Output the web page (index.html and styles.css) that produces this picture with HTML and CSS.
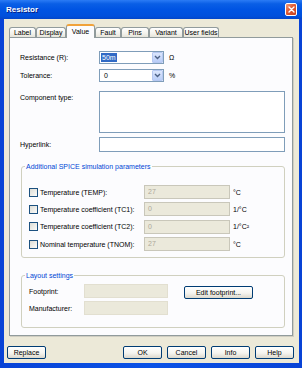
FILE: index.html
```html
<!DOCTYPE html>
<html lang="en">
<head>
  <meta charset="UTF-8" />
  <title>Resistor</title>
  <link rel="stylesheet" href="styles.css">
</head>
<body>
  <div class="window">
    <div class="titlebar">
      <span class="title">Resistor</span>
      <span class="close">
        <svg width="7" height="7" viewBox="0 0 7 7"><path d="M1 1L6 6M6 1L1 6" stroke="#fff" stroke-width="1.4" stroke-linecap="round"/></svg>
      </span>
    </div>
    <div class="frame">
      <div class="client">
        <div class="tabs">
          <div class="tab">Label</div>
          <div class="tab">Display</div>
          <div class="tab active">Value</div>
          <div class="tab">Fault</div>
          <div class="tab">Pins</div>
          <div class="tab">Variant</div>
          <div class="tab">User fields</div>
        </div>

        <div class="panel">
          <div class="field-row">
            <span class="lbl">Resistance (R):</span>
            <div class="select">
              <span class="val picked">50m</span>
              <span class="drop"><svg width="7" height="5" viewBox="0 0 7 5"><path d="M1 1L3.5 3.5L6 1" fill="none" stroke="#4d6185" stroke-width="1.4"/></svg></span>
            </div>
            <span class="unit">Ω</span>
          </div>
          <div class="field-row gap-s">
            <span class="lbl">Tolerance:</span>
            <div class="select">
              <span class="val">0</span>
              <span class="drop"><svg width="7" height="5" viewBox="0 0 7 5"><path d="M1 1L3.5 3.5L6 1" fill="none" stroke="#4d6185" stroke-width="1.4"/></svg></span>
            </div>
            <span class="unit">%</span>
          </div>
          <div class="field-row top gap-m">
            <span class="lbl">Component type:</span>
            <div class="textbox tall"></div>
          </div>
          <div class="field-row gap-xs">
            <span class="lbl">Hyperlink:</span>
            <div class="textbox"></div>
          </div>

          <div class="group spice">
            <span class="legend">Additional SPICE simulation parameters</span>
            <div class="check-row">
              <span class="cb"></span><span class="clbl">Temperature (TEMP):</span>
              <span class="dis">27</span><span class="cunit">°C</span>
            </div>
            <div class="check-row">
              <span class="cb"></span><span class="clbl">Temperature coefficient (TC1):</span>
              <span class="dis">0</span><span class="cunit">1/°C</span>
            </div>
            <div class="check-row">
              <span class="cb"></span><span class="clbl">Temperature coefficient (TC2):</span>
              <span class="dis">0</span><span class="cunit">1/°C²</span>
            </div>
            <div class="check-row">
              <span class="cb"></span><span class="clbl">Nominal temperature (TNOM):</span>
              <span class="dis">27</span><span class="cunit">°C</span>
            </div>
          </div>

          <div class="group layout">
            <span class="legend">Layout settings</span>
            <div class="lay-col">
              <div class="lay-row"><span class="llbl">Footprint:</span><span class="lin"></span></div>
              <div class="lay-row"><span class="llbl">Manufacturer:</span><span class="lin"></span></div>
            </div>
            <button class="btn edit">Edit footprint...</button>
          </div>
        </div>

        <div class="footer">
          <button class="btn">Replace</button>
          <button class="btn push">OK</button>
          <button class="btn">Cancel</button>
          <button class="btn">Info</button>
          <button class="btn">Help</button>
        </div>
      </div>
    </div>
  </div>
</body>
</html>
```

FILE: styles.css
```css
* { box-sizing: border-box; }
body {
  margin: 0;
  font-family: 'Liberation Sans', Arial, sans-serif;
  font-size: 7px;
  color: #000;
  background: #fff;
}
.window {
  width: 302px;
  height: 368px;
  display: flex;
  flex-direction: column;
  background: #0841d8;
}
.titlebar {
  height: 19px;
  flex: none;
  display: flex;
  align-items: center;
  padding: 0 5px 0 6px;
  background: linear-gradient(#2b7bf5, #0a5fe6 20%, #0054e3 50%, #0050dc 85%, #0346c9);
}
.title {
  color: #fff;
  font-weight: bold;
  font-size: 8px;
  text-shadow: 1px 1px 0 #0a1e82;
}
.close {
  margin-left: auto;
  width: 12px;
  height: 13px;
  border: 1px solid #fff;
  border-radius: 2px;
  background: linear-gradient(135deg, #f09c7e, #e05a33 45%, #c8401c);
  display: flex;
  align-items: center;
  justify-content: center;
}
.frame {
  flex: 1;
  display: flex;
  padding: 0 3px 5px 4px;
  background: linear-gradient(90deg, #0843d6, #0a52e6 50%, #0843d6);
}
.client {
  flex: 1;
  display: flex;
  flex-direction: column;
  background: #ece9d8;
  padding: 5px 0 4px 0;
}

/* tabs */
.tabs {
  height: 13px;
  display: flex;
  align-items: flex-end;
  margin: 0 6px 0 5px;
  position: relative;
  z-index: 1;
}
.tab {
  height: 10px;
  line-height: 9px;
  text-align: center;
  border: 1px solid #919b9c;
  border-bottom: none;
  border-radius: 3px 3px 0 0;
  background: linear-gradient(#fff, #f3f2ec 60%, #e6e4da);
}
.tab:nth-child(1) { width: 27px; }
.tab:nth-child(2) { width: 30px; }
.tab:nth-child(3) { width: 29px; }
.tab:nth-child(4) { width: 26px; }
.tab:nth-child(5) { width: 28px; }
.tab:nth-child(6) { width: 34px; }
.tab:nth-child(7) { width: 36px; }
.tab.active {
  height: 14px;
  margin-bottom: -1px;
  line-height: 11px;
  background: #fcfcfe;
  border-top: 2px solid #f0a23a;
}

.panel {
  height: 299px;
  flex: none;
  margin: 0 6px 0 5px;
  border: 1px solid #919b9c;
  box-shadow: 1px 1px 0 #d0cec2;
  background: #fcfcfe;
  padding: 13px 0 0 10px;
  display: flex;
  flex-direction: column;
}
.field-row {
  display: flex;
  align-items: center;
}
.field-row.top { align-items: flex-start; }
.field-row.top .lbl { padding-top: 3px; }
.gap-s { margin-top: 5px; }
.gap-m { margin-top: 9px; }
.gap-xs { margin-top: 4px; }
.lbl {
  width: 79px;
  flex: none;
}
.select {
  width: 65px;
  height: 13px;
  border: 1px solid #7f9db9;
  background: #fff;
  display: flex;
  align-items: center;
  padding: 0 0 0 1px;
}
.val { padding: 0 3px; line-height: 9px; }
.val.picked {
  background: #316ac5;
  color: #fff;
  padding: 0 1px;
}
.drop {
  margin-left: auto;
  width: 11px;
  height: 11px;
  border-radius: 1px;
  background: linear-gradient(#dbe6fc, #b9cdf8);
  border: 1px solid #b6c8f1;
  display: flex;
  align-items: center;
  justify-content: center;
}
.unit { margin-left: 5px; }
.textbox {
  width: 186px;
  height: 15px;
  border: 1px solid #7f9db9;
  background: #fff;
}
.textbox.tall { height: 42px; }

/* group boxes */
.group {
  position: relative;
  margin: 0 7px 0 1px;
  border: 1px solid #d0d0bf;
  border-radius: 3px;
}
.legend {
  position: absolute;
  top: -5px;
  left: 3px;
  padding: 0 1px;
  line-height: 9px;
  color: #0046d5;
  background: #fcfcfe;
}
.spice {
  margin-top: 14px;
  height: 92px;
  padding: 18px 0 0 7px;
  display: flex;
  flex-direction: column;
  gap: 3.4px;
}
.check-row {
  height: 14px;
  display: flex;
  align-items: center;
}
.cb {
  width: 9px;
  height: 9px;
  flex: none;
  border: 1px solid #1c5180;
  background: linear-gradient(135deg, #dcdcd5, #fbfbf9);
  margin-right: 2px;
}
.clbl { width: 104px; flex: none; }
.dis {
  width: 86px;
  height: 14px;
  border: 1px solid #c9c7ba;
  background: #ebe9db;
  color: #aca899;
  padding-left: 3px;
  line-height: 12px;
}
.cunit { margin-left: 3px; }
.layout {
  margin-top: 17px;
  height: 53px;
  padding: 8px 0 0 7px;
  display: flex;
  align-items: flex-start;
}
.lay-col {
  display: flex;
  flex-direction: column;
  gap: 3px;
}
.lay-row {
  display: flex;
  align-items: center;
}
.llbl { width: 55px; }
.lin {
  width: 84px;
  height: 14px;
  border: 1px solid #e2dfd0;
  background: #ebe9db;
}

/* buttons */
.btn {
  width: 39px;
  height: 13px;
  padding: 0;
  font-family: inherit;
  font-size: 7px;
  color: #000;
  border: 1px solid #003c74;
  border-radius: 2px;
  background: linear-gradient(#fff, #f5f4ef 55%, #dcd8cc);
}
.btn.edit {
  width: 69px;
  margin: 2px 0 0 16px;
}
.footer {
  margin-top: 10px;
  display: flex;
  gap: 5px;
  padding: 0 5px 0 3px;
}
.btn.push { margin-left: auto; }
```
